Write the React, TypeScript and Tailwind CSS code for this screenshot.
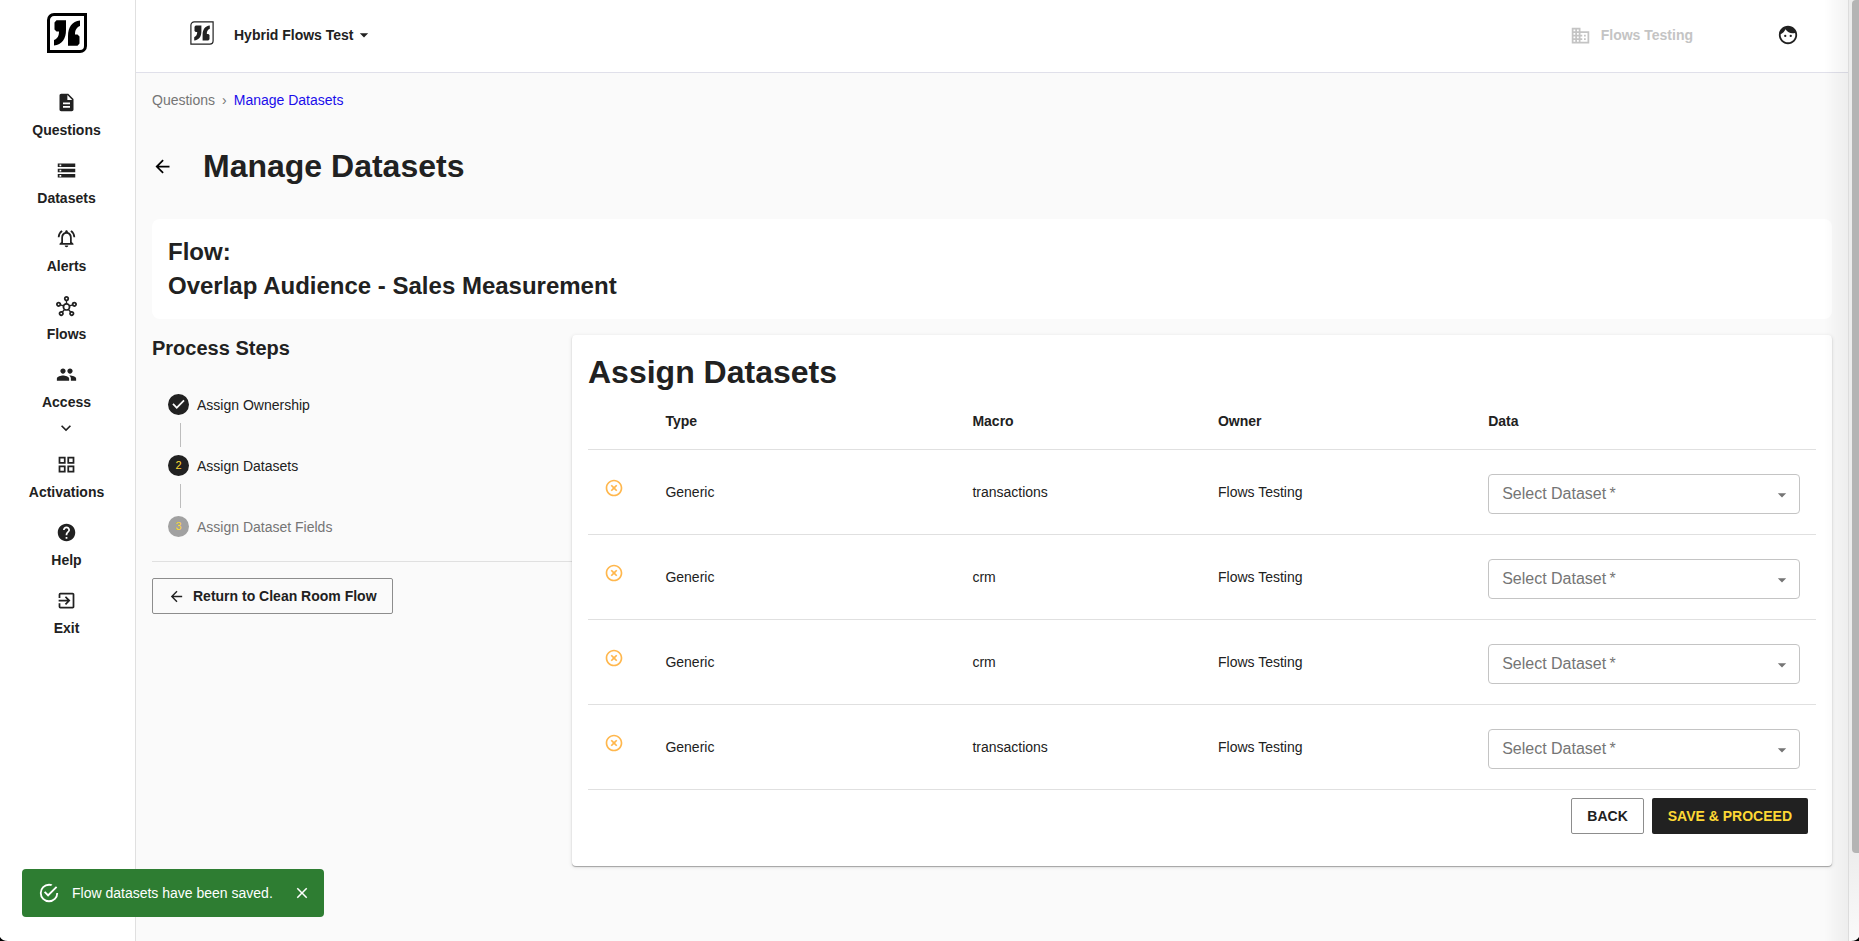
import { useId } from "react";
import type { IconType } from "react-icons";
import {
  MdArrowBack,
  MdArrowDropDown,
  MdBusiness,
  MdClose,
  MdDescription,
  MdExitToApp,
  MdExpandMore,
  MdFace,
  MdHelp,
  MdHighlightOff,
  MdOutlineGridView,
  MdOutlineHub,
  MdOutlineNotificationsActive,
  MdPeople,
  MdStorage,
} from "react-icons/md";

type NavItem = { label: string; icon: IconType; expandable?: boolean };

const NAV: NavItem[] = [
  { label: "Questions", icon: MdDescription },
  { label: "Datasets", icon: MdStorage },
  { label: "Alerts", icon: MdOutlineNotificationsActive },
  { label: "Flows", icon: MdOutlineHub },
  { label: "Access", icon: MdPeople, expandable: true },
  { label: "Activations", icon: MdOutlineGridView },
  { label: "Help", icon: MdHelp },
  { label: "Exit", icon: MdExitToApp },
];

const ROWS = [
  { type: "Generic", macro: "transactions", owner: "Flows Testing" },
  { type: "Generic", macro: "crm", owner: "Flows Testing" },
  { type: "Generic", macro: "crm", owner: "Flows Testing" },
  { type: "Generic", macro: "transactions", owner: "Flows Testing" },
];

const QUOTE = "M33 7.500V13C29.500 14.500 28 17 28 21.500H30.500L32.500 23.500V30.500L30.500 32.700H21V23C21 14 25 8.500 33 7.500Z";

function Logo({ className, stroke }: { className: string; stroke: number }) {
  return (
    <svg viewBox="0 0 40 40" className={className} fill="currentColor" aria-hidden="true">
      <path
        d="M7 1.500H38.500V33a5.500 5.500 0 0 1-5.500 5.500H1.500V7A5.500 5.500 0 0 1 7 1.500Z"
        fill="none"
        stroke="currentColor"
        strokeWidth={stroke}
      />
      <path d={QUOTE} />
      <path d={QUOTE} transform="rotate(180 20 20)" />
    </svg>
  );
}

function Sidebar() {
  return (
    <aside className="flex w-[136px] shrink-0 flex-col items-center border-r border-[#e0e0e0] bg-white pr-0.5 pt-[13px]">
      <a href="#home" aria-label="Home" className="text-black">
        <Logo className="size-10" stroke={3} />
      </a>
      <nav className="mt-[39px] flex w-full flex-col items-center gap-5">
        {NAV.map(({ label, icon: Icon, expandable }) => (
          <a key={label} href={`#${label.toLowerCase()}`} className="flex flex-col items-center">
            <Icon className="size-[21px]" />
            <span className="mt-[7px] text-sm font-bold">{label}</span>
            {expandable && <MdExpandMore className="-mb-1 mt-1.5 size-5" />}
          </a>
        ))}
      </nav>
    </aside>
  );
}

function Header() {
  return (
    <header className="flex h-[73px] items-center justify-between border-b border-[#e0e0ea] bg-white pb-0.5 pl-[54px] pr-[49px]">
      <div className="flex items-center">
        <Logo className="mb-1 size-6" stroke={2} />
        <button type="button" className="ml-5 flex items-center text-sm font-bold">
          Hybrid Flows Test
          <MdArrowDropDown className="size-5" />
        </button>
      </div>
      <div className="flex items-center">
        <div className="flex items-center gap-2.5 text-sm font-bold text-[#c4c4c4]">
          <MdBusiness className="size-[21px]" />
          Flows Testing
        </div>
        <button type="button" aria-label="Account" className="ml-[84px]">
          <MdFace className="size-[22px]" />
        </button>
      </div>
    </header>
  );
}

function StepBadge({ n, muted }: { n: number; muted?: boolean }) {
  return (
    <span
      className={`flex size-[21px] items-center justify-center rounded-full text-[11px] text-[#fdd835] ${
        muted ? "bg-[#a1a1a1]" : "bg-[#212121]"
      }`}
    >
      {n}
    </span>
  );
}

function Connector() {
  return <li aria-hidden="true" className="ml-3 h-6 border-l border-[#bdbdbd]" />;
}

function ProcessSteps() {
  return (
    <section className="w-1/4 shrink-0">
      <h2 className="text-xl font-bold leading-[26px]">Process Steps</h2>
      <ol className="mt-[25px] px-4 pb-4 text-sm">
        <li className="flex h-[37px] items-center gap-2">
          <svg viewBox="0 0 24 24" className="size-[21px]" fill="currentColor" aria-hidden="true">
            <path d="M12 0a12 12 0 1 0 0 24 12 12 0 0 0 0-24zm-2 17l-5-5 1.4-1.4 3.6 3.6 7.6-7.6L19 8l-9 9z" />
          </svg>
          Assign Ownership
        </li>
        <Connector />
        <li className="flex h-[37px] items-center gap-2">
          <StepBadge n={2} />
          Assign Datasets
        </li>
        <Connector />
        <li className="flex h-[37px] items-center gap-2 text-[#757575]">
          <StepBadge n={3} muted />
          Assign Dataset Fields
        </li>
      </ol>
      <hr className="border-[#e0e0e0]" />
      <button
        type="button"
        className="mt-4 flex h-9 items-center gap-2 rounded-xs border border-[#8d8d8d] px-[15px] text-sm font-bold"
      >
        <MdArrowBack className="size-[17px]" />
        Return to Clean Room Flow
      </button>
    </section>
  );
}

function DatasetSelect() {
  const id = useId();
  return (
    <div className="relative">
      <select
        id={id}
        required
        defaultValue=""
        className="block h-10 w-full appearance-none rounded border border-[#c4c4c4] bg-white px-3.5 text-base"
      >
        <option value="" />
      </select>
      <label
        htmlFor={id}
        className="pointer-events-none absolute left-3.5 top-2 text-base leading-6 text-[#757575]"
      >
        Select Dataset&thinsp;*
      </label>
      <MdArrowDropDown className="pointer-events-none absolute right-2 top-[11px] size-5 text-[#757575]" />
    </div>
  );
}

function AssignDatasets() {
  return (
    <section className="flex-1 rounded bg-white px-4 pb-8 pt-4 shadow-[0_1px_1px_rgba(0,0,0,0.3),0_1px_4px_rgba(0,0,0,0.12)]">
      <h2 className="text-[32px] font-bold leading-[42px]">Assign Datasets</h2>
      <table className="w-full table-fixed text-left text-sm">
        <thead>
          <tr className="h-14 border-b border-[#e0e0e0]">
            <th className="w-[5%]" aria-label="Status" />
            <th className="w-[25%] px-4">Type</th>
            <th className="w-[20%] px-4">Macro</th>
            <th className="w-[22%] px-4">Owner</th>
            <th className="w-[28%] px-4">Data</th>
          </tr>
        </thead>
        <tbody>
          {ROWS.map((row, i) => (
            <tr key={i} className="h-[85px] border-b border-[#e0e0e0]">
              <td className="pb-2 pl-4">
                <MdHighlightOff className="size-5 text-[#ffb74d]" />
              </td>
              <td className="px-4">{row.type}</td>
              <td className="px-4">{row.macro}</td>
              <td className="px-4">{row.owner}</td>
              <td className="px-4 pt-1">
                <DatasetSelect />
              </td>
            </tr>
          ))}
        </tbody>
      </table>
      <div className="mt-2 flex justify-end gap-2 px-2 text-sm font-bold">
        <button type="button" className="h-9 rounded-xs border border-[#8d8d8d] px-[15px]">
          BACK
        </button>
        <button type="button" className="h-9 rounded-xs bg-[#212121] px-4 text-[#fdd835]">
          SAVE &amp; PROCEED
        </button>
      </div>
    </section>
  );
}

function Toast() {
  return (
    <div
      role="status"
      className="fixed bottom-6 left-[22px] flex h-12 items-center rounded bg-[#2e7d32] pl-4 pr-[13px] text-sm text-white"
    >
      <svg viewBox="0 0 24 24" className="size-[22px]" fill="currentColor" aria-hidden="true">
        <path d="M20,12A8,8 0 0,1 12,20A8,8 0 0,1 4,12A8,8 0 0,1 12,4C12.76,4 13.5,4.11 14.2,4.31L15.77,2.74C14.61,2.26 13.34,2 12,2A10,10 0 0,0 2,12A10,10 0 0,0 12,22A10,10 0 0,0 22,12M7.91,10.08L6.5,11.5L11,16L21,6L19.59,4.58L11,13.17L7.91,10.08Z" />
      </svg>
      <span className="ml-3">Flow datasets have been saved.</span>
      <button type="button" aria-label="Close" className="ml-5">
        <MdClose className="size-[18px]" />
      </button>
    </div>
  );
}

function ScrollRail() {
  return (
    <div aria-hidden="true" className="pointer-events-none fixed inset-y-0 right-0 flex">
      <div className="w-6 bg-linear-to-r from-transparent to-black/5" />
      <div className="w-[11px] border-l border-[#dcdcdc] bg-linear-to-b from-[#ececec] from-90% to-[#fafafa] pl-[3px]">
        <div className="h-[calc(100%-88px)] rounded-l bg-[#b4b4b4]" />
      </div>
    </div>
  );
}

// Black slivers left outside the rounded bottom corners of the window
function WindowCorners() {
  return (
    <div
      aria-hidden="true"
      className="pointer-events-none fixed inset-x-0 bottom-0 flex items-end justify-between"
    >
      <svg viewBox="0 0 8 4" className="h-1 w-2">
        <path d="M0 0C1.500 2.500 4 4 8 4H0Z" />
      </svg>
      <svg viewBox="0 0 8 4" className="h-1 w-2">
        <path d="M8 0C6.500 2.500 4 4 0 4H8Z" />
      </svg>
    </div>
  );
}

export default function App() {
  return (
    <div className="flex min-h-screen bg-[#fafafa] font-['Liberation_Sans',Arial,sans-serif] text-[#212121]">
      <Sidebar />
      <div className="flex min-w-0 flex-1 flex-col pr-[11px]">
        <Header />
        <main className="px-4 pt-[17px]">
          <nav aria-label="Breadcrumb" className="flex gap-[7px] text-sm">
            <a href="#questions" className="text-[#757575]">
              Questions
            </a>
            <span className="text-[#757575]">›</span>
            <a href="#datasets" className="text-[#1a0dea]">
              Manage Datasets
            </a>
          </nav>
          <div className="mt-9 flex items-center gap-[30px]">
            <button type="button" aria-label="Back">
              <MdArrowBack className="size-[21px] text-black" />
            </button>
            <h1 className="text-[32px] font-bold leading-10">Manage Datasets</h1>
          </div>
          <div className="mt-[33px] rounded-lg bg-white p-4 text-2xl font-bold leading-[34px]">
            <p>Flow:</p>
            <p>Overlap Audience - Sales Measurement</p>
          </div>
          <div className="mt-4 flex items-start">
            <ProcessSteps />
            <AssignDatasets />
          </div>
        </main>
      </div>
      <Toast />
      <ScrollRail />
      <WindowCorners />
    </div>
  );
}
